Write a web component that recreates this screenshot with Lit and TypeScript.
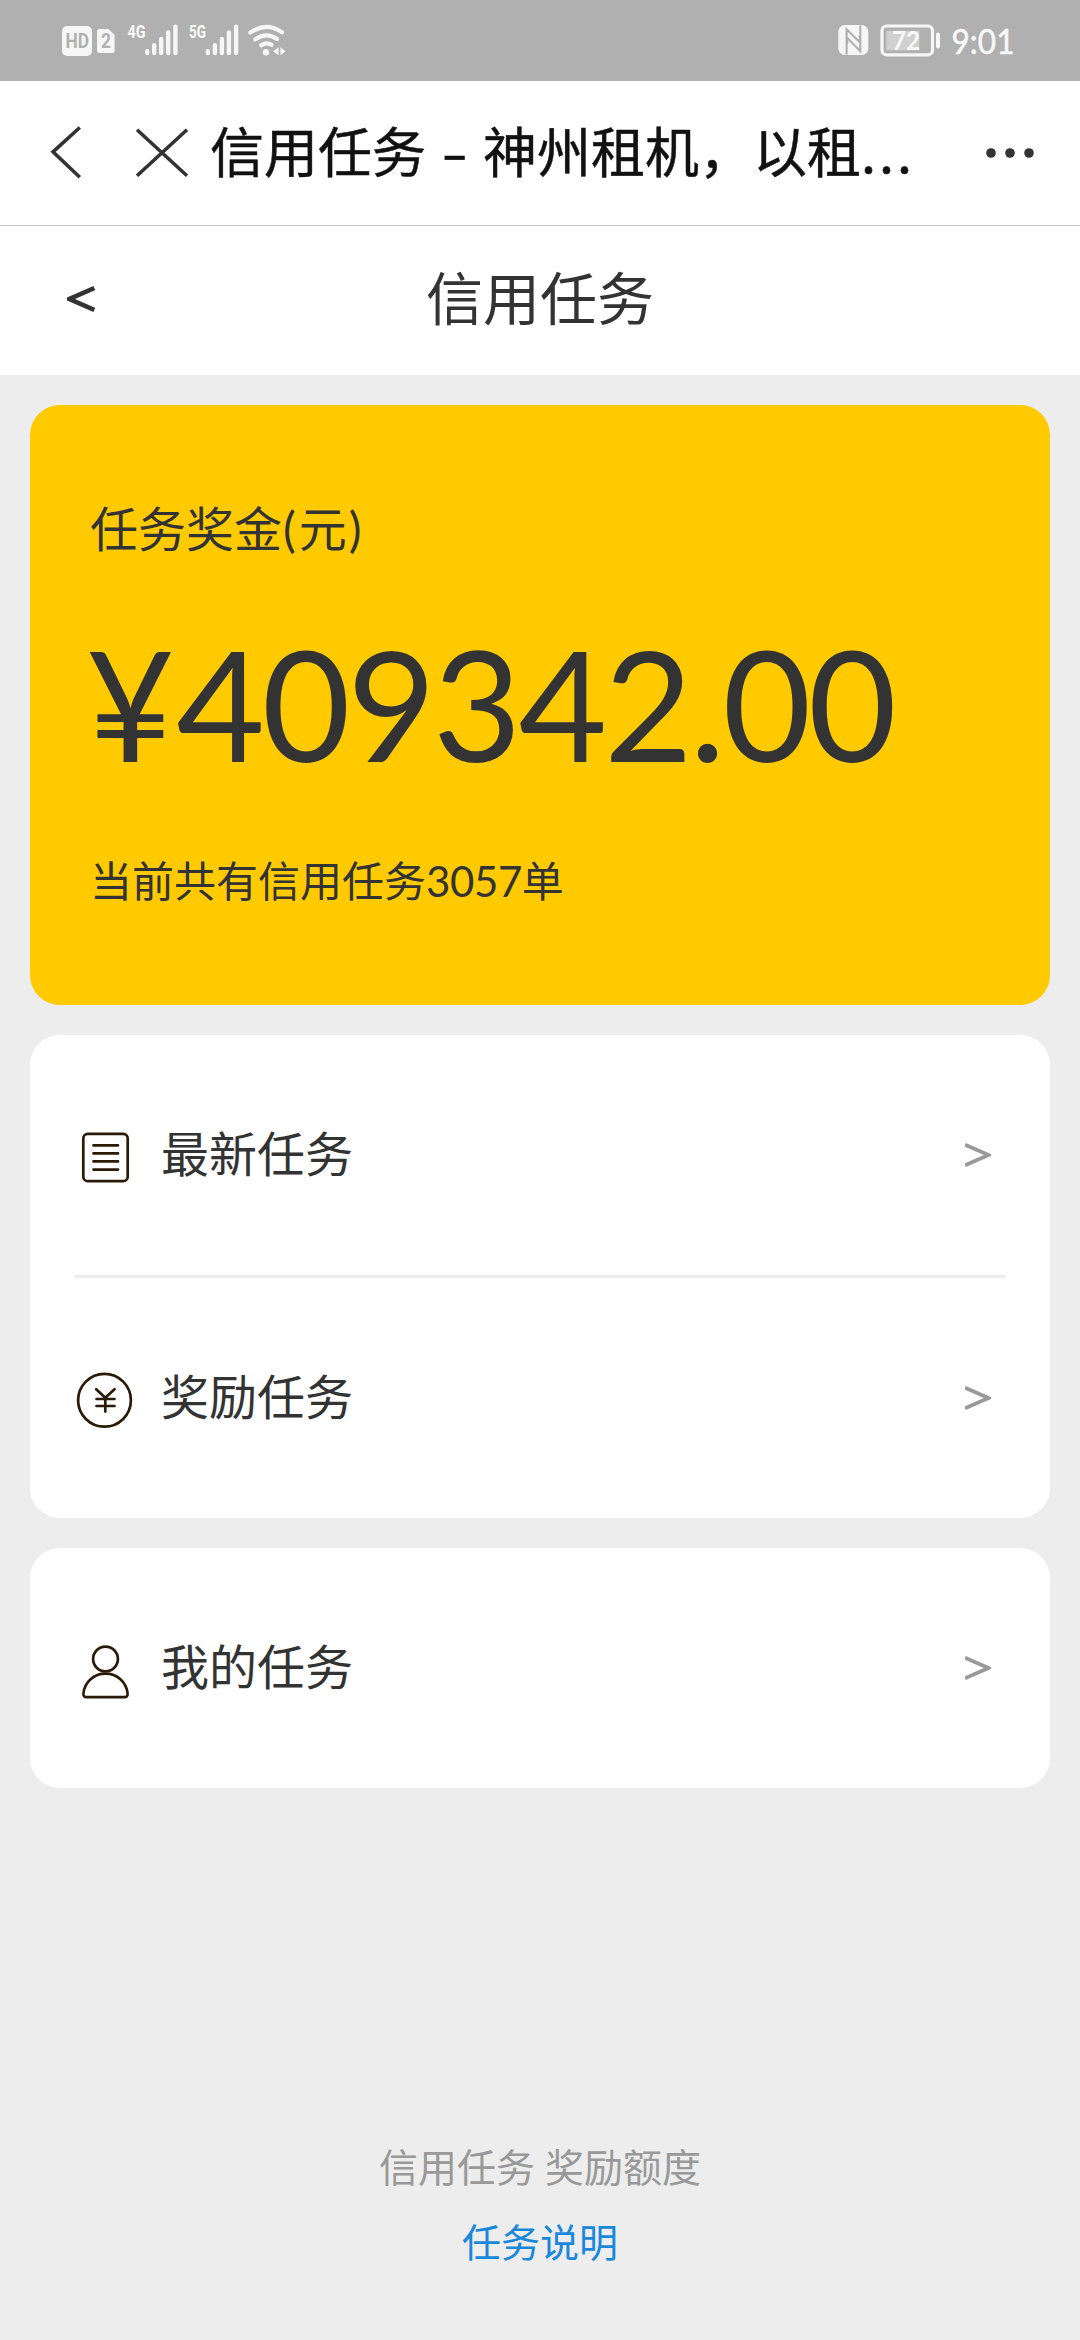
import { LitElement, html, css, svg } from "lit";
import { customElement, property } from "lit/decorators.js";

type IconName = "list" | "coin" | "person";

const icons = {
  list: svg`
    <rect x="8.3" y="8.8" width="44.4" height="47.4" rx="4.5"></rect>
    <path d="M18.5 20.3H43M18.5 28.4H43M18.5 36.4H43M18.5 44.6H43"></path>`,
  coin: svg`
    <circle cx="29.5" cy="32.3" r="26.4"></circle>
    <path d="M21.2 21.2L30.3 29.7L39.5 21.2M30.3 29.7V43.6M21.5 31H39.5M21.5 38H39.5"></path>`,
  person: svg`
    <circle cx="30.5" cy="21" r="12.4"></circle>
    <path d="M30.5 35.6C18.8 35.6 9.8 44 8.4 55.2C8 57.8 9.3 59.2 11.6 59.2H49.4C51.7 59.2 53 57.8 52.6 55.2C51.2 44 42.2 35.6 30.5 35.6Z"></path>`,
};

const signalBars = (x: number) => svg`
  <path d="M${x} 51.2V53.1M${x + 7} 45.2V53.1M${x + 14} 39V53.1M${x + 21} 32.5V53.1M${x + 28.2} 26.8V53.1"
    fill="none" stroke="#f6f6f6" stroke-width="4.4" stroke-linecap="round"></path>`;

@customElement("status-bar")
class StatusBar extends LitElement {
  static styles = css`
    :host { display: block; height: 81px; background: #b0b0b0; }
    .bar { display: block; }
    text { font-family: Lato, "Liberation Sans", sans-serif; fill: #f8f8f8; }
    .hd { font: 700 20px Roboto, sans-serif; fill: #b0b0b0; }
    .net { font: 700 19px Roboto, sans-serif; }
    .battery { font-size: 27px; font-weight: 700; }
    .time { font-size: 35px; stroke: #f8f8f8; stroke-width: 0.5; }
  `;
  render() {
    return html`<svg class="bar" width="1080" height="81" viewBox="0 0 1080 81">
      <rect x="62" y="26" width="30" height="30" rx="5" fill="#f6f6f6"></rect>
      <text class="hd" x="65.5" y="48.3" textLength="23.5" lengthAdjust="spacingAndGlyphs">HD</text>
      <path d="M99 29H108.5L114.6 35V50.5Q114.6 53 112 53H99.3Q97 53 97 50.5V31.3Q97 29 99 29Z" fill="#f6f6f6"></path>
      <text class="hd" x="101" y="48.4" textLength="10" lengthAdjust="spacingAndGlyphs">2</text>
      <text class="net" x="127.5" y="38.3" textLength="18" lengthAdjust="spacingAndGlyphs">4G</text>
      ${signalBars(147.2)}
      <text class="net" x="189" y="38.3" textLength="17" lengthAdjust="spacingAndGlyphs">5G</text>
      ${signalBars(207.9)}
      <g fill="none" stroke="#f6f6f6" stroke-width="4.2" stroke-linecap="round">
        <path d="M250.3 32.6Q266.3 21.5 282 32.2"></path>
        <path d="M255.2 39.4Q266.3 31.5 277 39"></path>
        <path d="M261.2 45.3Q266.3 41.5 271.5 44.8"></path>
      </g>
      <circle cx="266" cy="52.2" r="3.2" fill="#f6f6f6"></circle>
      <path d="M273 51.2L278.6 47.2V55.2ZM285.6 51.2L280.4 47.2V55.2Z" fill="#f6f6f6"></path>

      <rect x="838.3" y="25" width="30" height="30" rx="6.5" fill="#f6f6f6"></rect>
      <path d="M846.6 54.6V29.2L859.8 42.2V35.8M860.3 25.4V51.2L847.2 37.8V44" fill="none" stroke="#b0b0b0" stroke-width="2.1"></path>
      <rect x="882" y="26" width="50.5" height="28.8" rx="4.5" fill="none" stroke="#f6f6f6" stroke-width="3.2"></rect>
      <rect x="886.3" y="30.8" width="33" height="19.6" fill="#d0d0d0"></rect>
      <text class="battery" x="892" y="50.2" textLength="28" lengthAdjust="spacingAndGlyphs">72</text>
      <path d="M938 34.5V46.5" fill="none" stroke="#f6f6f6" stroke-width="4" stroke-linecap="round"></path>
      <text class="time" x="951.5" y="54" textLength="63" lengthAdjust="spacingAndGlyphs">9:01</text>
    </svg>`;
  }
}

@customElement("task-row")
class TaskRow extends LitElement {
  @property() icon: IconName = "list";
  @property() label = "";
  static styles = css`
    :host { display: flex; align-items: center; height: 240px; }
    .icon { width: 60px; height: 60px; overflow: visible; fill: none; stroke: #2b1a08; stroke-width: 2.7; stroke-linecap: round; stroke-linejoin: round; }
    .label { flex: 1; margin-left: 26px; font-size: 48px; line-height: 60px; padding-bottom: 2px; }
    .arrow { width: 26px; height: 26px; margin-right: 14px; fill: none; stroke: #999; stroke-width: 3.8; }
  `;
  render() {
    return html`
      <svg class="icon" viewBox="0 0 60 60">${icons[this.icon]}</svg>
      <span class="label">${this.label}</span>
      <svg class="arrow" viewBox="0 0 26 26"><path d="M0 2.8L23.5 13L0 23.2"></path></svg>`;
  }
}

@customElement("app-root")
class AppRoot extends LitElement {
  static styles = css`
    :host {
      display: flex; flex-direction: column; box-sizing: border-box; height: 2340px; overflow: hidden;
      background: #ededed; color: #333;
      font-family: Lato, "Noto Sans CJK SC", sans-serif;
    }
    .browser { display: flex; align-items: center; box-sizing: border-box; height: 145px; background: #fff; border-bottom: 1px solid #c8c8c8; padding-right: 45px; }
    .controls { flex: none; width: 210px; height: 144px; }
    .site { flex: 1; display: flex; padding-bottom: 6px; color: #111; -webkit-text-stroke: 0.5px #111; font-size: 54px; line-height: 72px; font-family: "Noto Sans CJK SC", sans-serif; white-space: pre; }
    .dash { width: 57px; text-align: center; transform: scaleX(1.4); }
    .dots { letter-spacing: 3px; }
    .more { flex: none; width: 50px; height: 12px; fill: #333; }
    .head { display: grid; grid-template-columns: 120px 1fr 120px; align-items: center; height: 149px; background: #fff; }
    .back { width: 28px; height: 28px; margin: 0 0 3px 67px; fill: none; stroke: #333; stroke-width: 4.6; }
    .title { padding-bottom: 6px; text-align: center; font-size: 57px; line-height: 72px; }
    .content { display: flex; flex-direction: column; gap: 30px; padding: 30px; }
    .bonus { box-sizing: border-box; height: 600px; padding: 91px 60px 0; border-radius: 30px; background: #ffcb00; display: flex; flex-direction: column; }
    .caption { font-size: 48px; line-height: 66px; }
    .open { padding: 0 3px 0 1px; }
    .close { padding-left: 2px; }
    .amount { font-size: 153px; line-height: 180px; margin: 51px 0 0 -4px; letter-spacing: -3.2px; white-space: nowrap; }
    .yen { letter-spacing: 1.5px; }
    .count { font-size: 42px; line-height: 60px; margin-top: 58px; }
    .number { letter-spacing: -0.4px; }
    .card { padding: 0 45px; border-radius: 30px; background: #fff; }
    .rule { height: 3px; background: #ededed; }
    .footer { margin-top: auto; padding-bottom: 60px; text-align: center; font-size: 39px; line-height: 75px; color: #999; }
    .link { color: #1a88da; }
  `;
  render() {
    return html`
      <status-bar></status-bar>
      <div class="browser">
        <svg class="controls" viewBox="0 0 210 144" fill="none" stroke="#333" stroke-width="3.6">
          <path d="M79.8 46.5L53 70.8L79.8 96.3M137 48.8L187 94.8M187 48.8L137 94.8"></path>
        </svg>
        <div class="site"><span>信用任务</span><span class="dash">-</span><span>神州租机，以租</span><span class="dots">...</span></div>
        <svg class="more" viewBox="0 0 50 12"><circle cx="6" cy="6" r="4.8"></circle><circle cx="25" cy="6" r="4.8"></circle><circle cx="44" cy="6" r="4.8"></circle></svg>
      </div>
      <div class="head">
        <svg class="back" viewBox="0 0 28 28"><path d="M27.3 3L2.5 14L27.3 25"></path></svg>
        <span class="title">信用任务</span>
      </div>
      <div class="content">
        <section class="bonus">
          <div class="caption">任务奖金<span class="open">(</span>元<span class="close">)</span></div>
          <div class="amount"><span class="yen">¥</span>409342.00</div>
          <div class="count">当前共有信用任务<span class="number">3057</span>单</div>
        </section>
        <section class="card">
          <task-row icon="list" label="最新任务"></task-row>
          <div class="rule"></div>
          <task-row icon="coin" label="奖励任务"></task-row>
        </section>
        <section class="card">
          <task-row icon="person" label="我的任务"></task-row>
        </section>
      </div>
      <div class="footer">
        <div>信用任务 奖励额度</div>
        <div class="link">任务说明</div>
      </div>`;
  }
}
